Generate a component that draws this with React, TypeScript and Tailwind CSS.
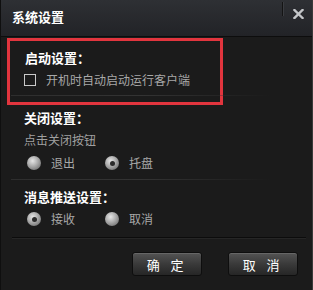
import React from 'react';

const font = { fontFamily: '"Noto Sans CJK SC", "Noto Sans", sans-serif' };

const Radio: React.FC<{ checked?: boolean; label: string }> = ({ checked, label }) => (
  <div className="flex items-center w-[78px]">
    <span className="w-[14px] h-[14px] rounded-full flex items-center justify-center bg-[radial-gradient(circle_at_40%_35%,#e6e6e6_0%,#a9a9a9_45%,#5a5a5a_100%)]">
      {checked && <span className="w-[5px] h-[5px] rounded-full bg-[#2b2b2b]" />}
    </span>
    <span className="ml-[10px] text-[12px] leading-4 text-[#a8a8a8]">{label}</span>
  </div>
);

const Separator: React.FC<{ className?: string }> = ({ className = '' }) => (
  <div className={`h-px bg-gradient-to-r from-[#2e2e2e] via-[#333333] to-transparent ${className}`} />
);

const DialogButton: React.FC<{ children: React.ReactNode }> = ({ children }) => (
  <button className="w-[70px] h-[24px] rounded-[3px] border border-[#0e0e0e] bg-gradient-to-b from-[#545454] via-[#3a3a3a] to-[#262626] text-white text-[13px] leading-none tracking-[0.3em] shadow-[inset_0_1px_0_#666]">
    {children}
  </button>
);

export default function App() {
  return (
    <div
      className="w-[313px] h-[290px] flex flex-col bg-[#1b1b1b] border-l border-[#0f0f0f] border-r border-r-[#3a3a3a] overflow-hidden"
      style={font}
    >
      {/* Title bar */}
      <div className="h-[37px] flex items-start border-b border-[#0d0d0d] bg-gradient-to-b from-[#2e3034] to-[#222327] shrink-0">
        <div className="ml-[11px] mt-[9px] text-[13px] leading-4 font-bold text-white">系统设置</div>
        <div className="ml-auto mt-[2px] h-[14px] w-px bg-[#141414] shadow-[1px_0_0_#3a3c40]" />
        <button className="ml-[9px] mt-[8px] mr-[8px] w-[12px] h-[12px] flex items-center justify-center">
          <svg width="11" height="10" viewBox="0 0 11 10">
            <path d="M1.5 1 L9.5 9 M9.5 1 L1.5 9" stroke="#c4c6c9" strokeWidth="2.4" strokeLinecap="square" />
          </svg>
        </button>
      </div>

      {/* Startup section, highlighted */}
      <div className="mt-[1px] ml-[6px] w-[216px] h-[67px] border-[3px] border-[#e2353e] shrink-0">
        <div className="pt-[9px] pl-[15px] text-[13px] leading-4 font-bold text-white">启动设置：</div>
        <div className="mt-[6px] pl-[14px] flex items-center">
          <span className="w-[12px] h-[12px] border border-[#c9c9c9]" />
          <span className="ml-[10px] text-[12px] leading-4 text-[#a8a8a8]">开机时自动启动运行客户端</span>
        </div>
        <Separator className="mt-[7px] ml-[1px] w-[260px]" />
      </div>

      {/* Close section */}
      <div className="pl-[23px] mt-[5px] text-[13px] leading-4 font-bold text-white">关闭设置：</div>
      <div className="pl-[23px] mt-[6px] text-[12px] leading-4 text-[#a0a0a0]">点击关闭按钮</div>
      <div className="pl-[26px] mt-[7px] flex">
        <Radio label="退出" />
        <Radio label="托盘" checked />
      </div>
      <Separator className="mt-[8px] ml-[10px] w-[260px]" />

      {/* Push section */}
      <div className="pl-[23px] mt-[9px] text-[13px] leading-4 font-bold text-white">消息推送设置：</div>
      <div className="pl-[26px] mt-[6px] flex">
        <Radio label="接收" checked />
        <Radio label="取消" />
      </div>
      <div className="mt-[10px] ml-[11px] mr-[6px] h-px bg-[#0c0c0c] shadow-[0_1px_0_#262626]" />

      {/* Footer buttons */}
      <div className="mt-[14px] flex justify-end gap-[26px] pr-[14px]">
        <DialogButton>确 定</DialogButton>
        <DialogButton>取 消</DialogButton>
      </div>
    </div>
  );
}
